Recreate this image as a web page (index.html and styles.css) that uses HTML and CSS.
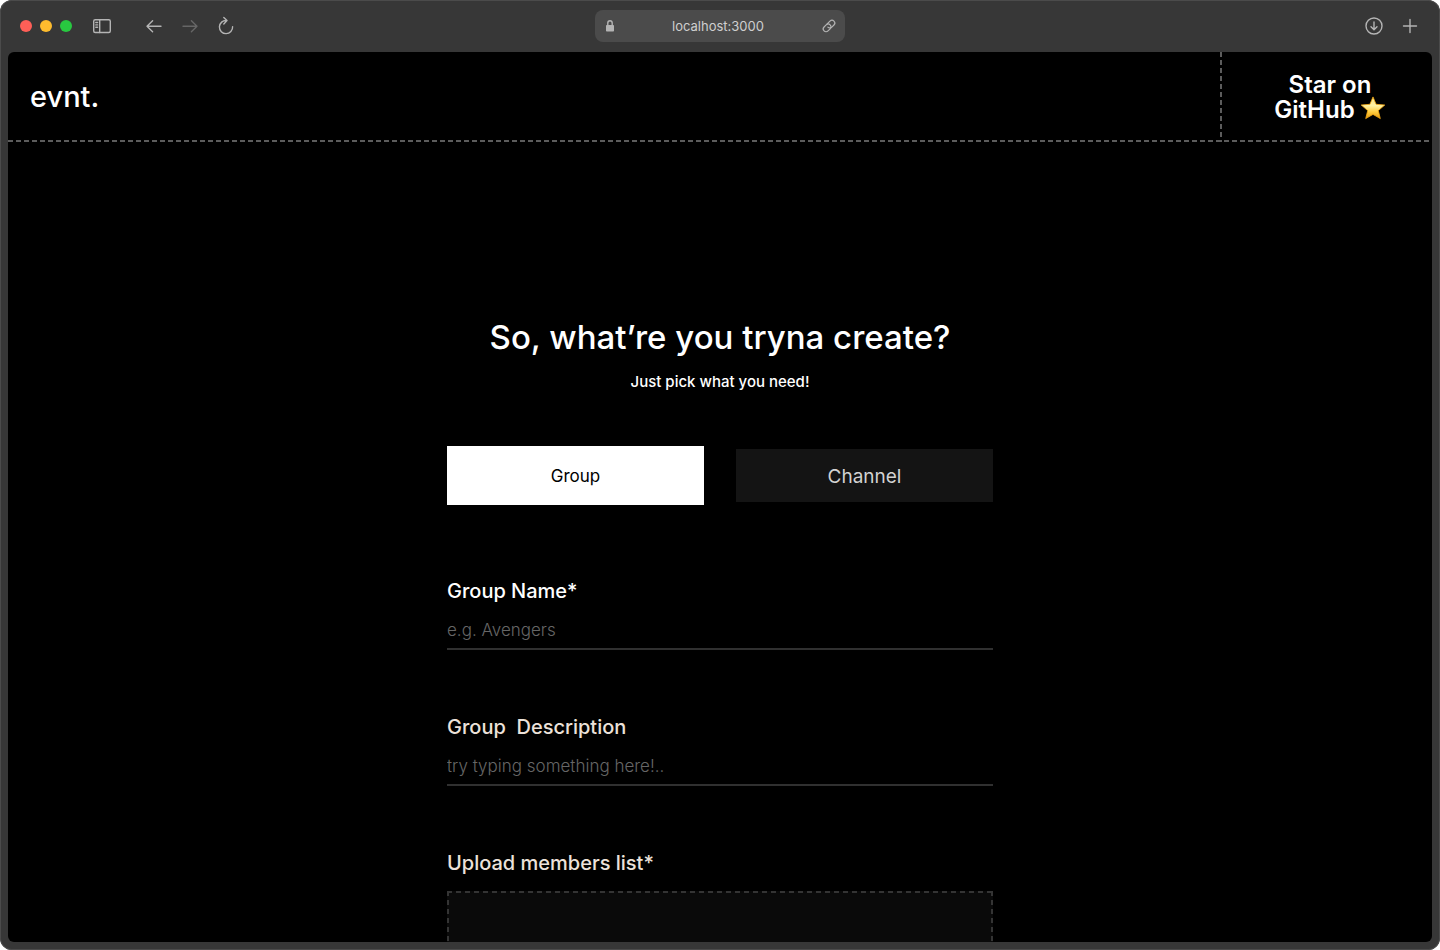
FILE: index.html
```html
<!DOCTYPE html>
<html lang="en">
<head>
<meta charset="utf-8">
<meta name="viewport" content="width=device-width, initial-scale=1">
<title>evnt.</title>
<link rel="stylesheet" href="styles.css">
</head>
<body>
<div class="window">
  <div class="toolbar">
    <div class="tools tools-left">
      <div class="lights">
        <button class="light light-close" aria-label="Close"></button>
        <button class="light light-min" aria-label="Minimize"></button>
        <button class="light light-max" aria-label="Zoom"></button>
      </div>
      <button class="tool tool-sidebar" aria-label="Sidebar">
        <svg width="20" height="20" viewBox="0 0 20 20"><rect x="1.7" y="3.7" width="16.6" height="12.8" rx="1.5"/><path d="M7.7 3.7v12.8M3.8 6.5h1.8M3.8 8.9h1.8M3.8 11.3h1.8"/></svg>
      </button>
      <div class="nav">
        <button class="tool" aria-label="Back">
          <svg width="20" height="20" viewBox="0 0 20 20"><path d="M17 10.3H3M8.6 4.800L3 10.300l5.600 5.500"/></svg>
        </button>
        <button class="tool tool-off" aria-label="Forward" disabled>
          <svg width="20" height="20" viewBox="0 0 20 20"><path d="M3 10.3h14M11.4 4.800l5.600 5.500-5.600 5.500"/></svg>
        </button>
        <button class="tool" aria-label="Reload">
          <svg width="20" height="20" viewBox="0 0 20 20"><path d="M10.600 4.500A6.600 6.600 0 1 0 16.600 10.600M7.800 1.500l3.200 3.100-3.200 3.300"/></svg>
        </button>
      </div>
    </div>
    <div class="address">
      <svg width="10" height="14" viewBox="0 0 10 14"><path class="solid" d="M1.800 6h6.400q.8 0 .8.8v4.900q0 .8-.8.8H1.800q-.8 0-.8-.8V6.800q0-.8.8-.8z"/><path d="M2.800 6V3.900a2.200 2.200 0 0 1 4.400 0V6"/></svg>
      <input class="address-input" aria-label="Address" value="localhost:3000">
      <svg class="link-icon" width="16" height="16" viewBox="0 0 16 16"><g transform="rotate(-45 8 8)"><rect x="1" y="5.200" width="8.600" height="5.600" rx="2.800"/><path d="M8.200 5.200h4a2.800 2.800 0 0 1 0 5.600H9.200a2.800 2.800 0 0 1-2.800-2.800"/></g></svg>
    </div>
    <div class="tools tools-right">
      <button class="tool" aria-label="Downloads">
        <svg width="20" height="20" viewBox="0 0 20 20"><circle cx="10" cy="10" r="8"/><path d="M10 6v7.500M7 10.700l3 3 3-3"/></svg>
      </button>
      <button class="tool" aria-label="New tab">
        <svg width="20" height="20" viewBox="0 0 20 20"><path d="M10 3.500v13M3.500 10h13"/></svg>
      </button>
    </div>
  </div>

  <div class="page">
    <header class="header">
      <a class="logo" href="#">evnt.</a>
      <a class="star-link" href="#">
        <span>Star on</span>
        <span class="star-line">GitHub
          <svg width="26" height="24" viewBox="0 0 26 24" aria-hidden="true">
            <defs><linearGradient id="gold" x1="0" y1="0" x2="0" y2="1"><stop offset="0" stop-color="#ffe27a"/><stop offset=".4" stop-color="#fff3a6"/><stop offset=".7" stop-color="#ffcb3c"/><stop offset="1" stop-color="#e39a12"/></linearGradient></defs>
            <path fill="url(#gold)" stroke="#f3a712" stroke-width=".8" stroke-linejoin="round" d="M13 .900l3.100 7.400 8.700.7-6.500 5.600 2 8-7.300-4.200-7.300 4.200 2-8L1.200 9l8.700-.7z"/>
          </svg>
        </span>
      </a>
    </header>

    <main class="main">
      <h1 class="title">So, what’re you tryna create?</h1>
      <p class="subtitle">Just pick what you need!</p>
      <form class="form">
        <div class="choices">
          <button class="choice choice-on" type="button" aria-pressed="true">Group</button>
          <button class="choice" type="button" aria-pressed="false">Channel</button>
        </div>
        <div class="field">
          <label class="label label-active" for="name">Group Name*</label>
          <input class="input" id="name" type="text" placeholder="e.g. Avengers">
        </div>
        <div class="field">
          <label class="label" for="description">Group&nbsp; Description</label>
          <input class="input" id="description" type="text" placeholder="try typing something here!..">
        </div>
        <div class="field">
          <label class="label" for="members">Upload members list*</label>
          <div class="drop"><input class="drop-input" id="members" type="file"></div>
        </div>
      </form>
    </main>
  </div>
</div>
</body>
</html>
```
FILE: styles.css
```css
* { box-sizing: border-box; }

body {
  margin: 0;
  background: #fff;
  color: #fff;
  font-family: Inter, "Liberation Sans", sans-serif;
}

button, input {
  margin: 0;
  padding: 0;
  border: 0;
  background: none;
  color: inherit;
  font: inherit;
}

a { color: inherit; text-decoration: none; }

.window {
  display: flex;
  flex-direction: column;
  height: 100vh;
  padding: 0 8px 8px;
  border-radius: 12px;
  background: #373737;
  box-shadow: inset 0 0 0 1px #4b4b4b;
  overflow: hidden;
}

/* Browser toolbar */
.toolbar {
  display: grid;
  grid-template-columns: 1fr 250px 1fr;
  align-items: center;
  flex: none;
  height: 52px;
}

.tools { display: flex; align-items: center; }
.tools-left { padding-left: 12px; }
.tools-right { justify-content: flex-end; gap: 16px; padding-right: 12px; }
.lights { display: flex; gap: 8px; }
.light { width: 12px; height: 12px; border-radius: 50%; }
.light-close { background: #ff5f57; }
.light-min { background: #febc2e; }
.light-max { background: #28c840; }
.nav { display: flex; gap: 16px; }

.tool { display: flex; color: #b4b4b4; }
.tool-sidebar { margin: 0 32px 0 20px; }
.tool-off { color: #666; }

.tool svg, .address svg {
  flex: none;
  fill: none;
  stroke: currentColor;
  stroke-width: 1.4;
  stroke-linecap: round;
  stroke-linejoin: round;
}

.address {
  display: flex;
  align-items: center;
  height: 32px;
  padding: 0 8px 0 10px;
  border-radius: 8px;
  background: #4b4b4b;
  color: #b4b4b4;
}

.address .solid { fill: currentColor; stroke: none; }
.address .link-icon { stroke-width: 1.2; }

.address-input {
  flex: 1;
  min-width: 0;
  color: #cfcfcf;
  font-size: 13px;
  line-height: 16px;
  text-align: center;
}

/* Site */
.page {
  flex: 1;
  min-height: 0;
  border-radius: 6px;
  background: #000;
  overflow: hidden;
}

.header {
  display: flex;
  justify-content: space-between;
  height: 90px;
  background: repeating-linear-gradient(90deg, #5c5c5c 0 5px, transparent 5px 8px) bottom / 100% 2px no-repeat;
}

.logo {
  align-self: center;
  padding-left: 22px;
  font-size: 29px;
  font-weight: 500;
  line-height: 36px;
}

.star-link {
  display: flex;
  flex-direction: column;
  align-items: center;
  justify-content: center;
  width: 212px;
  padding-left: 8px;
  background: repeating-linear-gradient(180deg, #5c5c5c 0 5px, transparent 5px 8px) left / 2px 100% no-repeat;
  font-size: 24px;
  font-weight: 600;
  line-height: 25px;
}

.star-line { display: flex; align-items: flex-start; gap: 5px; height: 25px; }
.star-line svg { margin-top: -1px; }

.main {
  width: 546px;
  max-width: 100%;
  margin: 0 auto;
  padding-top: 172px;
}

.title {
  margin: 0;
  font-size: 33px;
  font-weight: 500;
  line-height: 46px;
  text-align: center;
}

.subtitle {
  margin: 12px 0 0;
  font-size: 15px;
  font-weight: 500;
  line-height: 20px;
  text-align: center;
}

.choices {
  display: grid;
  grid-template-columns: 1fr 1fr;
  gap: 32px;
  align-items: center;
  margin: 54px 0 70px;
}

.choice {
  height: 53px;
  padding-top: 1px;
  background: #141414;
  color: #d2d2d2;
  font-size: 19px;
}

.choice-on {
  height: 59px;
  background: #fff;
  color: #000;
  font-size: 17px;
}

.field { margin-bottom: 61px; }

.label {
  display: block;
  color: #ece2da;
  font-size: 20px;
  font-weight: 500;
  line-height: 32px;
}

.label-active { color: #fff; }

.input {
  display: block;
  width: 100%;
  height: 43px;
  padding-top: 4px;
  border-bottom: 2px solid #303030;
  font-size: 17px;
  font-weight: 300;
}

.input::placeholder { color: #666; opacity: 1; }
.input:focus { outline: none; border-color: #666; }

.drop {
  height: 200px;
  margin-top: 12px;
  background:
    repeating-linear-gradient(90deg, #343434 0 5px, transparent 5px 9px) top / 100% 2px no-repeat,
    repeating-linear-gradient(180deg, #343434 0 5px, transparent 5px 9px) left / 2px 100% no-repeat,
    repeating-linear-gradient(180deg, #343434 0 5px, transparent 5px 9px) right / 2px 100% no-repeat,
    #0a0a0a;
}

.drop-input { display: block; width: 100%; height: 100%; opacity: 0; }
```
